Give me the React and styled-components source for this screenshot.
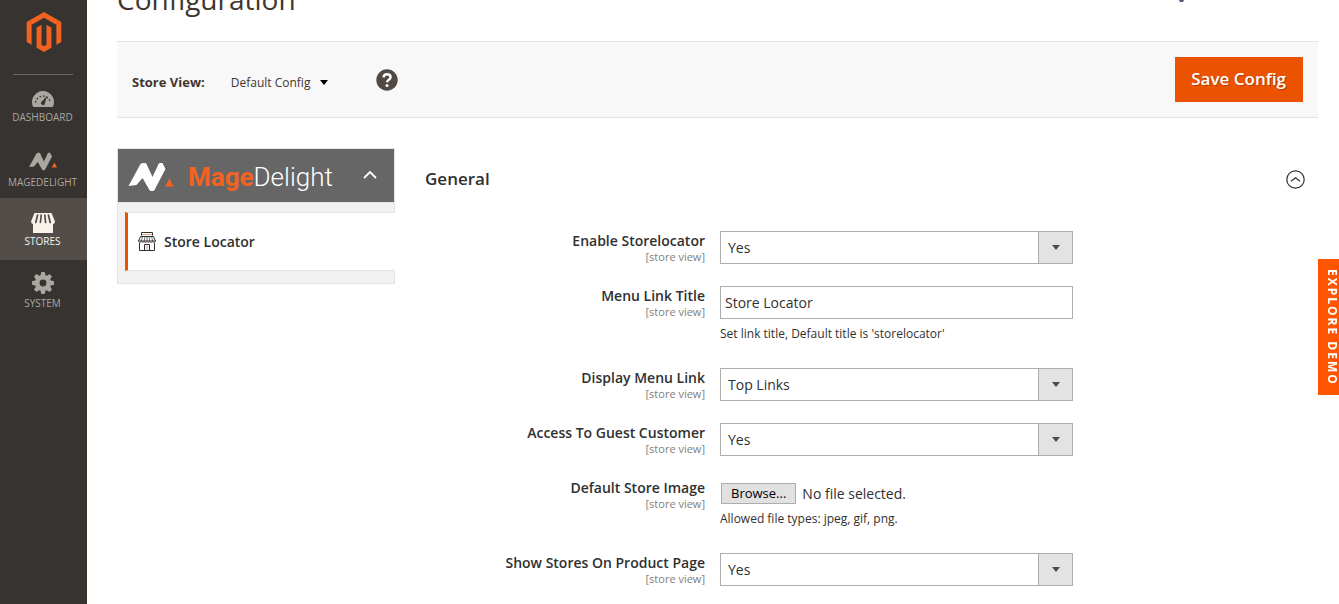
import React, { useRef, useState } from 'react';
import styled, { createGlobalStyle, css } from 'styled-components';

const GlobalStyle = createGlobalStyle`
  * {
    box-sizing: border-box;
  }

  body {
    margin: 0;
    background: #fff;
    color: #303030;
    font-family: 'Open Sans', 'Noto Sans', sans-serif;
    font-size: 14px;
  }

  button, input, select {
    font-family: inherit;
  }

  svg {
    display: block;
  }
`;

const Layout = styled.div`
  display: flex;
  height: 100vh;
  overflow: hidden;
`;

/* Admin menu */

const Menu = styled.nav`
  flex: 0 0 87px;
  background: #373330;
`;

const MenuLogo = styled.a`
  display: flex;
  justify-content: center;
  height: 74px;
  padding-top: 12px;
`;

const MenuList = styled.ul`
  margin: 0;
  padding: 0;
  list-style: none;

  &::before {
    content: '';
    display: block;
    height: 1px;
    margin: 0 14px -1px 13px;
    background: #736963;
  }
`;

const MenuLink = styled.a`
  display: flex;
  flex-direction: column;
  align-items: center;
  height: 62px;
  padding-right: 2px;
  color: #aaa6a0;
  font-size: 10px;
  line-height: 14px;
  text-decoration: none;
  text-transform: uppercase;

  ${props => props.$active && css`
    background: #524d49;
    color: #f7f3eb;
  `}
`;

const MenuIcon = styled.span`
  display: flex;
  align-items: flex-end;
  height: ${props => (props.$tall ? 39 : 36)}px;
  padding-bottom: ${props => props.$gap}px;
`;

/* Page */

const Page = styled.main`
  flex: 1;
  min-width: 0;
  padding: 0 21px 0 30px;
`;

const PageHeader = styled.header`
  display: flex;
  align-items: flex-end;
  justify-content: space-between;
  height: 41px;
  padding-bottom: 22px;
  overflow: hidden;
`;

const PageTitle = styled.h1`
  margin: 0;
  color: #41362f;
  font-size: 28px;
  font-weight: 400;
  line-height: 40px;
`;

const HeaderIcon = styled.div`
  align-self: flex-start;
  margin-right: 134px;
`;

const Toolbar = styled.div`
  display: flex;
  align-items: center;
  height: 77px;
  padding: 0 15px;
  border-top: 1px solid #e3e3e3;
  border-bottom: 1px solid #e3e3e3;
  background: #f8f8f8;
`;

const StoreLabel = styled.span`
  padding-top: 4px;
  color: #41362f;
  font-size: 13px;
  font-weight: 700;
`;

const StoreSwitcher = styled.button`
  display: flex;
  align-items: center;
  gap: 10px;
  margin: 0 48px 0 26px;
  padding: 6px 0 0;
  border: 0;
  background: none;
  color: #41362f;
  font-size: 12px;
`;

const HelpLink = styled.a`
  color: #514943;
`;

const SaveButton = styled.button`
  height: 45px;
  margin-left: auto;
  padding: 0 17px 2px 16px;
  border: 0;
  background: #eb5202;
  color: #fff;
  font-size: 17px;
  font-weight: 600;
  text-shadow: 1px 1px 0 rgba(0, 0, 0, 0.25);
`;

const Columns = styled.div`
  display: flex;
  align-items: flex-start;
  gap: 30px;
  padding-top: 30px;
`;

/* Config navigation */

const ConfigNav = styled.nav`
  flex: 0 0 278px;
  border: 1px solid #e3e3e3;
  background: #f1f1f1;
`;

const NavHeader = styled.button`
  display: flex;
  align-items: center;
  width: 100%;
  height: 53px;
  padding: 2px 17px 0 10px;
  border: 0;
  background: #666;
  color: #fff;
`;

const BrandName = styled.span`
  flex: 1;
  padding-left: 14px;
  font-family: Roboto, sans-serif;
  font-size: 26px;
  font-weight: 300;
  line-height: 32px;
  text-align: left;

  strong {
    color: #f26322;
    font-weight: 700;
  }
`;

const NavItems = styled.div`
  margin-right: -1px;
  padding: 9px 0 12px 7px;
  border-top: 1px solid #e3e3e3;
`;

const NavItem = styled.a`
  display: flex;
  align-items: center;
  gap: 8px;
  height: 59px;
  padding-left: 10px;
  border: solid #e3e3e3;
  border-width: 1px 0;
  border-left: 3px solid #eb5202;
  background: #fff;
  color: #303030;
  font-size: 14px;
  font-weight: 600;
  text-decoration: none;
`;

/* Settings form */

const Settings = styled.form`
  flex: 1;
  min-width: 0;
`;

const SectionHeader = styled.button`
  display: flex;
  align-items: center;
  justify-content: space-between;
  width: 100%;
  height: 60px;
  margin-bottom: 23px;
  padding: 0 13px 0 0;
  border: 0;
  background: none;
  color: #303030;
  font-size: 17px;
  font-weight: 600;
`;

const Field = styled.div`
  display: grid;
  grid-template-columns: 280fr 353fr 230fr;
  column-gap: 15px;
  margin-bottom: 22px;
`;

const FieldLabel = styled.label`
  font-size: 14px;
  font-weight: 600;
  line-height: 20px;
  text-align: right;
`;

const Scope = styled.span`
  display: block;
  color: #808080;
  font-size: 11px;
  font-weight: 400;
  line-height: 11px;
`;

const SelectBox = styled.div`
  display: grid;
  grid-template-columns: 1fr 35px;
  align-items: center;

  svg {
    grid-area: 1 / 2;
    justify-self: center;
    pointer-events: none;
  }
`;

const Select = styled.select`
  grid-area: 1 / 1 / 2 / 3;
  width: 100%;
  height: 33px;
  padding: 0 44px 0 7px;
  border: 1px solid #adadad;
  border-radius: 0;
  appearance: none;
  background: linear-gradient(90deg, #adadad 1px, #e3e3e3 1px) right / 34px 100% no-repeat #fff;
  color: #303030;
  font-size: 14px;
`;

const TextInput = styled.input`
  width: 100%;
  height: 33px;
  padding: 0 4px;
  border: 1px solid #adadad;
  border-radius: 0;
  color: #303030;
  font-size: 14px;
`;

const Note = styled.p`
  margin: 6px 0 3px;
  font-size: 12px;
  line-height: 18px;
`;

const FilePicker = styled.div`
  display: flex;
  align-items: center;
  gap: 6px;
  padding: 5px 0 0 1px;
  line-height: 21px;
`;

const BrowseButton = styled.button`
  height: 21px;
  padding: 0 9px;
  border: 1px solid #adadad;
  background: #e1e1e1;
  color: #000;
  font-size: 13px;
  line-height: 19px;
`;

const ExploreDemo = styled.a`
  position: fixed;
  top: 259px;
  right: 0;
  width: 21px;
  height: 136px;
  padding-top: 10px;
  background: #ff5501;
  color: #fff;
  font-size: 12px;
  font-weight: 700;
  letter-spacing: 2px;
  line-height: 14px;
  text-decoration: none;
  white-space: nowrap;
  writing-mode: vertical-rl;
`;

const MagentoLogo = () => (
  <svg width="40" height="40" viewBox="0 0 24 24" fill="#f26322">
    <path d="M12 24l-4.455-2.572v-12l2.97-1.715v12.001l1.485.902 1.485-.902V7.713l2.971 1.715v12L12 24zM22.391 6v12l-2.969 1.714V7.713L12 3.43 4.574 7.713v12.001L1.609 18V6L12 0l10.391 6z" />
  </svg>
);

const DashboardIcon = () => (
  <svg width="22" height="16" viewBox="0 0 22 16">
    <path d="M1.2 16A11 11 0 1 1 20.8 16z" fill="currentColor" />
    <path d="M3.5 11.5A7.6 7.6 0 0 1 18.5 11.5" fill="none" stroke="#373330" strokeWidth="1.4" strokeDasharray="1.6 1.9" />
    <path d="M15.2 4.8L12.8 12.6A1.9 1.9 0 1 1 9.6 10.8z" fill="#373330" />
  </svg>
);

const BrandMark = ({ width, height }) => (
  <svg width={width} height={height} viewBox="0 0 45 28">
    <path d="M0 23L12 1l2-1h3l1 1 6 13 6-13 1-1h3l3 6-11 21-1 1h-3l-1-1-7-12-6 7z" fill="currentColor" />
    <path d="M36.500 23.500L41 15.500l4 8z" fill="#f26322" />
  </svg>
);

const StoresIcon = () => (
  <svg width="24" height="20" viewBox="0 0 24 20" fill="currentColor">
    <path d="M3.500 0h17l3.500 8.500q-.5 2.500-2 2.500V20H2V11Q.5 11 0 8.500z" />
    <path d="M6.600 2L4.800 9.500M10.200 2L9.400 9.500M13.800 2l.8 7.500M17.400 2l1.800 7.500" stroke="#524d49" strokeWidth="1.700" strokeLinecap="round" />
  </svg>
);

const SystemIcon = () => (
  <svg width="22" height="22" viewBox="0 0 22 22">
    <circle cx="11" cy="11" r="5.700" fill="none" stroke="currentColor" strokeWidth="4.600" />
    {[0, 45, 90, 135, 180, 225, 270, 315].map(angle => (
      <path key={angle} d="M8.300 4L9.300 0h3.400l1 4z" fill="currentColor" transform={`rotate(${angle} 11 11)`} />
    ))}
  </svg>
);

const HelpIcon = () => (
  <svg width="22" height="22" viewBox="0 0 22 22">
    <circle cx="11" cy="11" r="10.700" fill="currentColor" />
    <path d="M7.500 8.400C7.700 6.300 9 5.200 11 5.200c2.200 0 3.600 1.200 3.600 3 0 2.400-3.500 2.600-3.500 5" fill="none" stroke="#fff" strokeWidth="2.400" />
    <circle cx="11" cy="16.500" r="1.500" fill="#fff" />
  </svg>
);

const ShopIcon = () => (
  <svg width="18" height="19" viewBox="0 0 18 19" fill="none" stroke="#303030">
    <path d="M3.500 3.500v-3h11v3M2.500 4.500h13l2 4.500h-17zM1.500 11v7.500h15V11M6.500 18.500v-6h5v6" />
    <path d="M.5 9c0 2 2.800 2 2.800 0 0 2 2.800 2 2.800 0 0 2 2.900 2 2.900 0 0 2 2.900 2 2.900 0 0 2 2.800 2 2.800 0 0 2 2.800 2 2.800 0M4.500 4.500L3.300 9M7 4.500L6.200 9M9 4.500V9M11 4.500l.8 4.500M13.500 4.500L14.700 9" strokeWidth=".7" />
    <path d="M4 2.500h10M9 12.500v6" stroke="#d98b5f" strokeWidth=".8" />
  </svg>
);

const Caret = ({ color }) => (
  <svg width="8" height="5" viewBox="0 0 8 5" fill={color}>
    <path d="M0 0h8L4 5z" />
  </svg>
);

const ChevronUp = () => (
  <svg width="14" height="12" viewBox="0 0 14 12" fill="none" stroke="#fff" strokeWidth="1.800">
    <path d="M1 7l6-6 6 6" />
  </svg>
);

const CollapseIcon = () => (
  <svg width="19" height="21" viewBox="0 -2 19 21" fill="none" stroke="#303030" strokeWidth="1.200">
    <circle cx="9.500" cy="9.500" r="8.700" />
    <path d="M5 11.300l4.500-3.600 4.500 3.600" />
  </svg>
);

const menuItems = [
  { label: 'Dashboard', icon: <DashboardIcon />, gap: 3 },
  { label: 'MageDelight', icon: <BrandMark width={28} height={19} />, gap: 4, tall: true },
  { label: 'Stores', icon: <StoresIcon />, gap: 1, active: true },
  { label: 'System', icon: <SystemIcon />, gap: 2 }
];

const fields = [
  { id: 'enabled', label: 'Enable Storelocator', type: 'select', value: 'Yes', options: ['Yes', 'No'] },
  { id: 'link_title', label: 'Menu Link Title', type: 'text', value: 'Store Locator', note: "Set link title, Default title is 'storelocator'" },
  { id: 'menu_link', label: 'Display Menu Link', type: 'select', value: 'Top Links', options: ['Top Links', 'Footer Links'] },
  { id: 'guest_access', label: 'Access To Guest Customer', type: 'select', value: 'Yes', options: ['Yes', 'No'] },
  { id: 'store_image', label: 'Default Store Image', type: 'file', note: 'Allowed file types: jpeg, gif, png.' },
  { id: 'product_page', label: 'Show Stores On Product Page', type: 'select', value: 'Yes', options: ['Yes', 'No'] }
];

const FileField = ({ id }) => {
  const inputRef = useRef(null);
  const [fileName, setFileName] = useState('');

  const handleChange = (e) => {
    const file = e.target.files[0];
    setFileName(file ? file.name : '');
  };

  return (
    <FilePicker>
      <input ref={inputRef} type="file" accept=".jpeg,.gif,.png" hidden onChange={handleChange} />
      <BrowseButton id={id} type="button" onClick={() => inputRef.current.click()}>
        Browse...
      </BrowseButton>
      <span>{fileName || 'No file selected.'}</span>
    </FilePicker>
  );
};

const Control = ({ field }) => {
  if (field.type === 'file') {
    return <FileField id={field.id} />;
  }

  if (field.type === 'text') {
    return <TextInput id={field.id} type="text" defaultValue={field.value} />;
  }

  return (
    <SelectBox>
      <Select id={field.id} defaultValue={field.value}>
        {field.options.map(option => (
          <option key={option}>{option}</option>
        ))}
      </Select>
      <Caret color="#514943" />
    </SelectBox>
  );
};

const App = () => {
  const [navOpen, setNavOpen] = useState(true);
  const [generalOpen, setGeneralOpen] = useState(true);

  return (
    <Layout>
      <GlobalStyle />
      <Menu>
        <MenuLogo href="#" aria-label="Magento Admin">
          <MagentoLogo />
        </MenuLogo>
        <MenuList>
          {menuItems.map(item => (
            <li key={item.label}>
              <MenuLink href="#" $active={item.active}>
                <MenuIcon $gap={item.gap} $tall={item.tall}>{item.icon}</MenuIcon>
                {item.label}
              </MenuLink>
            </li>
          ))}
        </MenuList>
      </Menu>

      <Page>
        <PageHeader>
          <PageTitle>Configuration</PageTitle>
          <HeaderIcon>
            <svg width="5" height="2" viewBox="0 0 5 2">
              <path d="M0 0h5L4 2H1z" fill="#5b5470" />
            </svg>
          </HeaderIcon>
        </PageHeader>

        <Toolbar>
          <StoreLabel>Store View:</StoreLabel>
          <StoreSwitcher type="button">
            Default Config
            <Caret color="#000" />
          </StoreSwitcher>
          <HelpLink href="#" aria-label="Help">
            <HelpIcon />
          </HelpLink>
          <SaveButton type="submit" form="config">Save Config</SaveButton>
        </Toolbar>

        <Columns>
          <ConfigNav>
            <NavHeader type="button" onClick={() => setNavOpen(!navOpen)}>
              <BrandMark width={46} height={28} />
              <BrandName><strong>Mage</strong>Delight</BrandName>
              <ChevronUp />
            </NavHeader>
            {navOpen && (
              <NavItems>
                <NavItem href="#">
                  <ShopIcon />
                  Store Locator
                </NavItem>
              </NavItems>
            )}
          </ConfigNav>

          <Settings id="config" onSubmit={(e) => e.preventDefault()}>
            <SectionHeader type="button" onClick={() => setGeneralOpen(!generalOpen)}>
              General
              <CollapseIcon />
            </SectionHeader>
            {generalOpen && fields.map(field => (
              <Field key={field.id}>
                <FieldLabel htmlFor={field.id}>
                  {field.label}
                  <Scope>[store view]</Scope>
                </FieldLabel>
                <div>
                  <Control field={field} />
                  {field.note && <Note>{field.note}</Note>}
                </div>
              </Field>
            ))}
          </Settings>
        </Columns>
      </Page>

      <ExploreDemo href="#">EXPLORE DEMO</ExploreDemo>
    </Layout>
  );
};

export default App;
